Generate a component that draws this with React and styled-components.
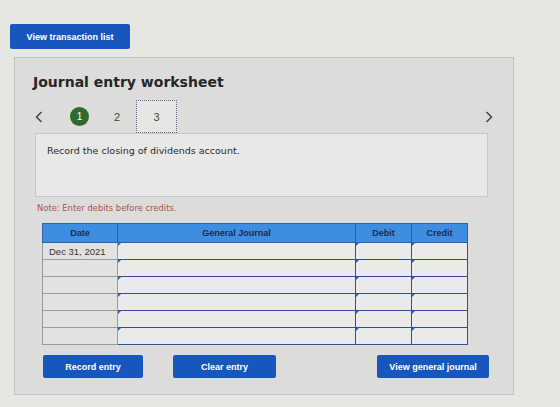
import React from "react";
import styled, { createGlobalStyle } from "styled-components";

const GlobalStyle = createGlobalStyle`
  html, body {
    margin: 0;
    padding: 0;
    background: #e6e6e3;
  }
  body {
    font-family: "DejaVu Sans", Verdana, sans-serif;
    color: #222;
  }
`;

const Page = styled.div`
  width: 560px;
  height: 407px;
  padding: 24px 0 0 10px;
  box-sizing: border-box;
  overflow: hidden;
`;

const BlueButton = styled.button`
  display: flex;
  align-items: center;
  justify-content: center;
  width: ${({ $w }) => $w}px;
  height: ${({ $h }) => $h || 23}px;
  margin-left: ${({ $ml }) => $ml || 0}px;
  padding: 0;
  border: none;
  border-radius: 2px;
  background: #1757bd;
  color: #fff;
  font-family: "Liberation Sans", Arial, sans-serif;
  font-weight: bold;
  font-size: ${({ $size }) => $size || 9}px;
  cursor: pointer;
`;

const Panel = styled.section`
  margin: 8px 0 0 4px;
  width: 500px;
  height: 338px;
  box-sizing: border-box;
  background: #dcdcda;
  border: 1px solid #c3c3c1;
  padding: 14px 0 0 0;
`;

const Title = styled.h2`
  margin: 0 0 0 18px;
  font-size: 14px;
  font-weight: bold;
  color: #262626;
  line-height: 20px;
`;

const NavRow = styled.div`
  display: flex;
  align-items: center;
  justify-content: space-between;
  height: 33px;
  margin: 8px 20px 0 20px;
`;

const Steps = styled.div`
  display: flex;
  align-items: center;
`;

const Chevron = styled.span`
  display: flex;
  align-items: center;
  color: #444;
`;

const StepDot = styled.span`
  display: flex;
  align-items: center;
  justify-content: center;
  width: 19px;
  height: 19px;
  border-radius: 50%;
  background: #2e6b2f;
  color: #fff;
  font-family: "Liberation Sans", Arial, sans-serif;
  font-size: 10px;
  margin-left: 27px;
`;

const StepNum = styled.span`
  font-family: "Liberation Sans", Arial, sans-serif;
  font-size: 11px;
  color: #444;
  margin-left: 25px;
`;

const StepBox = styled.span`
  display: flex;
  align-items: center;
  justify-content: center;
  width: 41px;
  height: 33px;
  box-sizing: border-box;
  border: 1.5px dotted #5b6a9a;
  background: #e6e6e4;
  font-family: "Liberation Sans", Arial, sans-serif;
  font-size: 11px;
  color: #444;
  margin-left: 16px;
`;

const Prompt = styled.div`
  margin: 0 0 0 20px;
  width: 453px;
  height: 64px;
  box-sizing: border-box;
  background: #e8e8e6;
  border: 1px solid #c7c7c5;
  padding: 11px 0 0 11px;
  font-size: 9.5px;
  color: #2a2a2a;
`;

const Note = styled.p`
  margin: 6px 0 0 22px;
  font-size: 8.4px;
  color: #b0504e;
  line-height: 10px;
`;

const Grid = styled.table`
  margin: 10px 0 0 27px;
  border-collapse: collapse;
  table-layout: fixed;
  width: 425px;
  font-family: "Liberation Sans", Arial, sans-serif;
`;

const Col = styled.col`
  width: ${({ $w }) => $w}px;
`;

const HeadRow = styled.tr`
  height: 19px;
`;

const Row = styled.tr`
  height: 17px;
`;

const Head = styled.th`
  padding: 0;
  background: #3e8de0;
  border: 1px solid #2b63a8;
  color: #1a2c55;
  font-size: 9px;
  font-weight: bold;
  text-align: center;
`;

const DateCell = styled.td`
  padding: 0 0 0 6px;
  background: #e2e2e0;
  border: 1px solid #9b9b9b;
  font-size: 9.5px;
  color: #333;
`;

const EntryCell = styled.td`
  padding: 0;
  border: 1.5px solid #2f4f96;
  border-top-width: 1px;
  background: #eaeae8;
  position: relative;

  &::before {
    content: "";
    position: absolute;
    left: 0;
    top: 0;
    border-top: 3px solid #2d5fc0;
    border-right: 3px solid transparent;
  }
`;

const Actions = styled.div`
  display: flex;
  align-items: center;
  margin: 10px 0 0 28px;
  width: 446px;
`;

const Spacer = styled.div`
  flex: 1;
`;

const ChevronIcon = ({ dir }) => (
  <svg width="8" height="12" viewBox="0 0 8 12">
    <path
      d={dir === "left" ? "M6.5 1 L1.5 6 L6.5 11" : "M1.5 1 L6.5 6 L1.5 11"}
      fill="none"
      stroke="#454545"
      strokeWidth="1.5"
    />
  </svg>
);

const rows = ["Dec 31, 2021", "", "", "", "", ""];

export default function App() {
  return (
    <Page>
      <GlobalStyle />
      <BlueButton $w={120} $h={25} $size={9}>
        View transaction list
      </BlueButton>
      <Panel>
        <Title>Journal entry worksheet</Title>
        <NavRow>
          <Steps>
            <Chevron>
              <ChevronIcon dir="left" />
            </Chevron>
            <StepDot>1</StepDot>
            <StepNum>2</StepNum>
            <StepBox>3</StepBox>
          </Steps>
          <Chevron>
            <ChevronIcon dir="right" />
          </Chevron>
        </NavRow>
        <Prompt>Record the closing of dividends account.</Prompt>
        <Note>Note: Enter debits before credits.</Note>
        <Grid>
          <colgroup>
            <Col $w={75} />
            <Col $w={238} />
            <Col $w={56} />
            <Col $w={56} />
          </colgroup>
          <thead>
            <HeadRow>
              <Head>Date</Head>
              <Head>General Journal</Head>
              <Head>Debit</Head>
              <Head>Credit</Head>
            </HeadRow>
          </thead>
          <tbody>
            {rows.map((d, i) => (
              <Row key={i}>
                <DateCell>{d}</DateCell>
                <EntryCell />
                <EntryCell />
                <EntryCell />
              </Row>
            ))}
          </tbody>
        </Grid>
        <Actions>
          <BlueButton $w={100}>Record entry</BlueButton>
          <BlueButton $w={103} $ml={30}>
            Clear entry
          </BlueButton>
          <Spacer />
          <BlueButton $w={112}>View general journal</BlueButton>
        </Actions>
      </Panel>
    </Page>
  );
}
